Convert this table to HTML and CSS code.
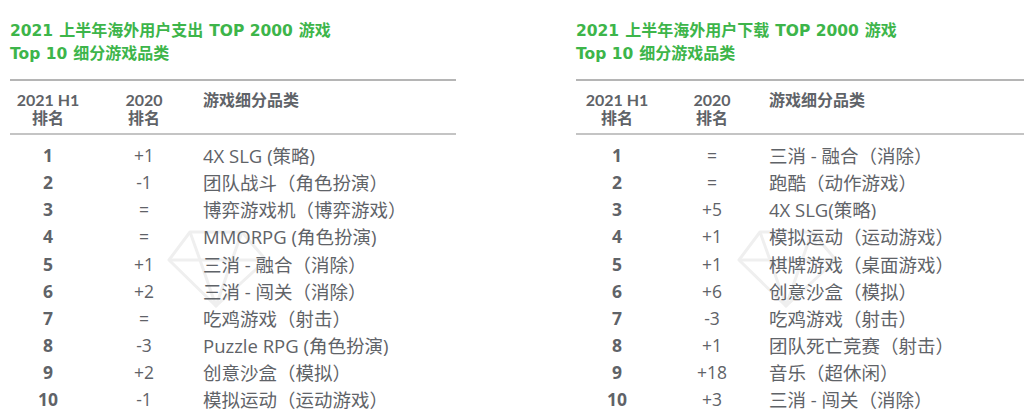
FILE: index.html
```html
<!DOCTYPE html>
<html lang="zh-CN">
<head>
<meta charset="utf-8">
<link rel="stylesheet" href="styles.css">
</head>
<body>
<div class="page">
  <svg class="mark mark-left" width="104" height="80" viewBox="0 0 104 80">
    <polygon points="24,2 76,2 100,30 50,76 3,30" />
    <polyline points="3,30 100,30" />
    <polyline points="24,2 34,30 50,76 66,30 76,2" />
  </svg>
  <svg class="mark mark-right" width="104" height="80" viewBox="0 0 104 80">
    <polygon points="24,2 76,2 100,30 50,76 3,30" />
    <polyline points="3,30 100,30" />
    <polyline points="24,2 34,30 50,76 66,30 76,2" />
  </svg>

  <section class="panel panel-left">
    <h2 class="title"><span class="line"><span class="lat">2021</span> 上半年海外用户支出 <span class="lat">TOP 2000</span> 游戏</span><span class="line"><span class="lat">Top 10</span> 细分游戏品类</span></h2>
    <div class="table">
      <div class="head">
        <div class="c-rank">2021 H1<br>排名</div>
        <div class="c-prev">2020<br>排名</div>
        <div class="c-cat">游戏细分品类</div>
      </div>
      <div class="body">
        <div class="row"><div class="c-rank">1</div><div class="c-prev">+1</div><div class="c-cat">4X SLG (策略)</div></div>
        <div class="row"><div class="c-rank">2</div><div class="c-prev">-1</div><div class="c-cat">团队战斗（角色扮演）</div></div>
        <div class="row"><div class="c-rank">3</div><div class="c-prev">=</div><div class="c-cat">博弈游戏机（博弈游戏）</div></div>
        <div class="row"><div class="c-rank">4</div><div class="c-prev">=</div><div class="c-cat">MMORPG (角色扮演)</div></div>
        <div class="row"><div class="c-rank">5</div><div class="c-prev">+1</div><div class="c-cat">三消 - 融合（消除）</div></div>
        <div class="row"><div class="c-rank">6</div><div class="c-prev">+2</div><div class="c-cat">三消 - 闯关（消除）</div></div>
        <div class="row"><div class="c-rank">7</div><div class="c-prev">=</div><div class="c-cat">吃鸡游戏（射击）</div></div>
        <div class="row"><div class="c-rank">8</div><div class="c-prev">-3</div><div class="c-cat">Puzzle RPG (角色扮演)</div></div>
        <div class="row"><div class="c-rank">9</div><div class="c-prev">+2</div><div class="c-cat">创意沙盒（模拟）</div></div>
        <div class="row"><div class="c-rank">10</div><div class="c-prev">-1</div><div class="c-cat">模拟运动（运动游戏）</div></div>
      </div>
    </div>
  </section>

  <section class="panel panel-right">
    <h2 class="title"><span class="line"><span class="lat">2021</span> 上半年海外用户下载 <span class="lat">TOP 2000</span> 游戏</span><span class="line"><span class="lat">Top 10</span> 细分游戏品类</span></h2>
    <div class="table">
      <div class="head">
        <div class="c-rank">2021 H1<br>排名</div>
        <div class="c-prev">2020<br>排名</div>
        <div class="c-cat">游戏细分品类</div>
      </div>
      <div class="body">
        <div class="row"><div class="c-rank">1</div><div class="c-prev">=</div><div class="c-cat">三消 - 融合（消除）</div></div>
        <div class="row"><div class="c-rank">2</div><div class="c-prev">=</div><div class="c-cat">跑酷（动作游戏）</div></div>
        <div class="row"><div class="c-rank">3</div><div class="c-prev">+5</div><div class="c-cat">4X SLG(策略)</div></div>
        <div class="row"><div class="c-rank">4</div><div class="c-prev">+1</div><div class="c-cat">模拟运动（运动游戏）</div></div>
        <div class="row"><div class="c-rank">5</div><div class="c-prev">+1</div><div class="c-cat">棋牌游戏（桌面游戏）</div></div>
        <div class="row"><div class="c-rank">6</div><div class="c-prev">+6</div><div class="c-cat">创意沙盒（模拟）</div></div>
        <div class="row"><div class="c-rank">7</div><div class="c-prev">-3</div><div class="c-cat">吃鸡游戏（射击）</div></div>
        <div class="row"><div class="c-rank">8</div><div class="c-prev">+1</div><div class="c-cat">团队死亡竞赛（射击）</div></div>
        <div class="row"><div class="c-rank">9</div><div class="c-prev">+18</div><div class="c-cat">音乐（超休闲）</div></div>
        <div class="row"><div class="c-rank">10</div><div class="c-prev">+3</div><div class="c-cat">三消 - 闯关（消除）</div></div>
      </div>
    </div>
  </section>
</div>
</body>
</html>
```

FILE: styles.css
```css
html, body {
  margin: 0;
  padding: 0;
  background: #ffffff;
}

body {
  font-family: "Open Sans", "Noto Sans CJK SC", sans-serif;
  color: #5f6368;
}

.page {
  position: relative;
  width: 1024px;
  height: 420px;
  overflow: hidden;
  display: flex;
}

.mark {
  position: absolute;
  top: 230px;
  fill: none;
  stroke: #efefef;
  stroke-width: 3;
  stroke-linejoin: round;
}

.mark-left { left: 166px; }
.mark-right { left: 736px; }

.panel {
  position: relative;
  display: flex;
  flex-direction: column;
}

.panel-left {
  margin-left: 10px;
  width: 446px;
}

.panel-right {
  margin-left: 120px;
  width: 448px;
}

.title {
  margin: 18px 0 0 0;
  font-family: "Noto Sans CJK SC", sans-serif;
  font-size: 16px;
  font-weight: 700;
  line-height: 23px;
  color: #3db54a;
  white-space: nowrap;
}

.title .line {
  display: flex;
  align-items: baseline;
  gap: 6px;
  height: 23px;
  overflow: visible;
}

.title .lat {
  font-family: "DejaVu Sans", sans-serif;
  font-size: 15.5px;
  font-weight: 700;
}

.table {
  margin-top: 15px;
}

.head {
  display: flex;
  border-top: 2px solid #b5b5b5;
  border-bottom: 2px solid #c4c4c4;
  padding: 10px 0 0 0;
  height: 42px;
  font-family: "Lato", "Noto Sans CJK SC", sans-serif;
  font-size: 16px;
  font-weight: 700;
  line-height: 18px;
  color: #5f6368;
}

.c-rank {
  width: 76px;
  text-align: center;
}

.c-prev {
  width: 116px;
  text-align: center;
}

.c-cat {
  flex: 1;
  padding-left: 1px;
}

.body {
  padding-top: 7px;
}

.row {
  display: flex;
  height: 27.15px;
  line-height: 27px;
  font-size: 18.5px;
  white-space: nowrap;
}

.row .c-rank,
.row .c-prev {
  font-size: 17.5px;
}

.row .c-rank {
  font-weight: 700;
}

.panel-right .c-rank { width: 82px; }
.panel-right .c-prev { width: 108px; }
.panel-right .c-cat { padding-left: 3px; }
```
